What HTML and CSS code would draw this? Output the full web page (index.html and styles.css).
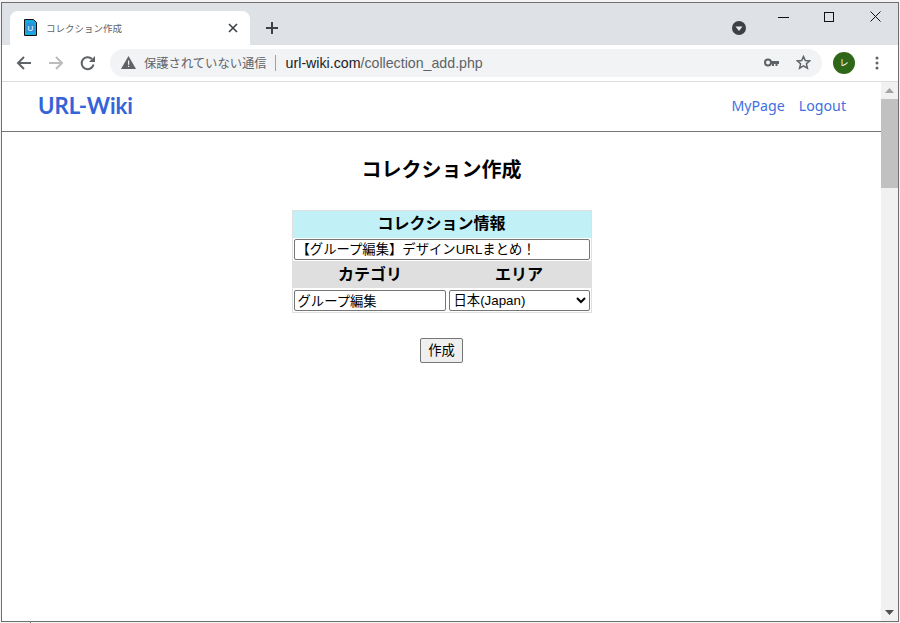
FILE: index.html
```html
<!DOCTYPE html>
<html lang="ja">
<head>
<meta charset="utf-8">
<title>コレクション作成</title>
<link rel="stylesheet" href="styles.css">
</head>
<body>
<div class="window">
  <div class="titlebar">
    <div class="tab">
      <svg class="favicon" width="13" height="17" viewBox="0 0 13 17"><path d="M.5.5h9l3 3v13H.5z" fill="#18a9e0" stroke="#111"/><rect x="2.500" y="4" width="8" height="9" rx="1" fill="#2f8fd8"/><text x="6.500" y="11.500" font-size="8" text-anchor="middle" fill="#fff" font-family="Liberation Sans">U</text></svg>
      <span class="tab-title">コレクション作成</span>
      <svg class="tab-close" width="10" height="10" viewBox="0 0 10 10"><path d="M1 1l8 8M9 1l-8 8" stroke="#3c4043" stroke-width="1.600"/></svg>
    </div>
    <svg class="new-tab" width="14" height="14" viewBox="0 0 14 14"><path d="M7 1v12M1 7h12" stroke="#3c4043" stroke-width="2"/></svg>
    <svg class="tab-search" width="14" height="14" viewBox="0 0 14 14"><circle cx="7" cy="7" r="7" fill="#3c4043"/><path d="M3.500 5.500h7L7 10z" fill="#e8eaed"/></svg>
    <div class="win-controls">
      <svg width="11" height="10" viewBox="0 0 11 10"><path d="M0 5.500h11" stroke="#111"/></svg>
      <svg width="10" height="10" viewBox="0 0 10 10"><rect x=".5" y=".5" width="9" height="9" fill="none" stroke="#111"/></svg>
      <svg class="win-close" width="11" height="11" viewBox="0 0 11 11"><path d="M.5.5l10 10M10.500.5l-10 10" stroke="#111"/></svg>
    </div>
  </div>
  <div class="toolbar">
    <svg class="nav" width="16" height="16" viewBox="0 0 16 16"><path d="M15 8H2M8 2L2 8l6 6" fill="none" stroke="#5f6368" stroke-width="2"/></svg>
    <svg class="nav" width="16" height="16" viewBox="0 0 16 16"><path d="M1 8h13M8 2l6 6-6 6" fill="none" stroke="#babcbe" stroke-width="2"/></svg>
    <svg class="nav" width="16" height="16" viewBox="0 0 16 16"><path d="M13.500 9.500A6 6 0 1 1 12 4" fill="none" stroke="#5f6368" stroke-width="2"/><path d="M15 1v6H9z" fill="#5f6368"/></svg>
    <div class="omnibox">
      <svg width="15" height="13" viewBox="0 0 15 13"><path d="M7.500 0L15 13H0z" fill="#5f6368"/><path d="M7 4.500h1.200v4.300H7zM7 9.800h1.200V11H7z" fill="#f1f3f4"/></svg>
      <span class="insecure">保護されていない通信</span>
      <span class="sep"></span>
      <span class="url"><span class="domain">url-wiki.com</span>/collection_add.php</span>
      <svg class="key" width="15" height="9" viewBox="0 0 15 9"><circle cx="4" cy="4.500" r="3" fill="none" stroke="#5f6368" stroke-width="2"/><path d="M7 3h8v3h-1.500v2h-2V6H10v2H8V6H7z" fill="#5f6368"/></svg>
      <svg class="star" width="15" height="15" viewBox="0 0 15 15"><path d="M7.500 1.500l1.800 4 4.400.4-3.300 2.900 1 4.300-3.900-2.300-3.900 2.300 1-4.300L1.300 5.900l4.400-.4z" fill="none" stroke="#5f6368" stroke-width="1.500"/></svg>
    </div>
    <span class="avatar">レ</span>
    <svg class="menu" width="4" height="14" viewBox="0 0 4 14"><circle cx="2" cy="2" r="1.500" fill="#5f6368"/><circle cx="2" cy="7" r="1.500" fill="#5f6368"/><circle cx="2" cy="12" r="1.500" fill="#5f6368"/></svg>
  </div>
  <div class="viewport">
    <main class="page">
      <header class="site-header">
        <a class="brand" href="#">URL-Wiki</a>
        <nav class="site-nav"><a href="#">MyPage</a><a href="#">Logout</a></nav>
      </header>
      <h1 class="page-title">コレクション作成</h1>
      <form class="form">
        <table class="info">
          <colgroup><col class="col-left"><col></colgroup>
          <tr><th colspan="2" class="head-blue">コレクション情報</th></tr>
          <tr><td colspan="2"><input class="field field-wide" type="text" value="【グループ編集】デザインURLまとめ！"></td></tr>
          <tr><th class="head-gray">カテゴリ</th><th class="head-gray">エリア</th></tr>
          <tr class="last-row">
            <td class="half"><input class="field field-plain" type="text" value="グループ編集"></td>
            <td class="half"><select class="field field-select"><option>日本(Japan)</option></select></td>
          </tr>
        </table>
        <button class="submit" type="button">作成</button>
      </form>
    </main>
    <div class="scrollbar">
      <svg width="9" height="5" viewBox="0 0 9 5"><path d="M4.500 0L9 5H0z" fill="#a3a3a3"/></svg>
      <div class="thumb"></div>
      <svg class="arrow-down" width="9" height="5" viewBox="0 0 9 5"><path d="M0 0h9L4.500 5z" fill="#505050"/></svg>
    </div>
  </div>
</div>
</body>
</html>
```

FILE: styles.css
```css
* { box-sizing: border-box; }
html, body { margin: 0; height: 100%; overflow: hidden; }
body { background: #f4f4f4; font-family: "Liberation Sans", "Noto Sans CJK JP", sans-serif; padding: 2px 1px 1px; }
.window {
  width: 898px; height: 620px; background: #fff;
  border: 1px solid #6e6e6e;
  display: flex; flex-direction: column; position: relative;
}
.window::after { content: ""; position: absolute; left: 28px; bottom: -2px; width: 1px; height: 2px; background: #777; }
.titlebar {
  height: 42px; flex: none; background: #dee1e6;
  display: flex; align-items: flex-end; padding-left: 8px; position: relative;
}
.tab {
  width: 240px; height: 34px; background: #fff;
  border-radius: 8px 8px 0 0;
  display: flex; align-items: center; padding: 0 12px 1px 14px;
}
.favicon { flex: none; }
.tab-title { margin-left: 9px; font-size: 9.500px; color: #5f6368; flex: 1; }
.new-tab { margin: 0 0 10px 15px; }
.tab-search { position: absolute; left: 730px; top: 18px; }
.win-controls { position: absolute; right: 17px; top: 8px; display: flex; gap: 35px; align-items: center; }
.win-close { margin-left: 1px; }
.toolbar {
  height: 37px; flex: none; background: #fff; border-bottom: 1px solid #dadce0;
  display: flex; align-items: center; padding: 0 0 1px 14px;
}
.nav { margin-right: 16px; flex: none; }
.nav:nth-child(3) { margin-right: 14px; }
.omnibox {
  width: 712px; height: 28px; border-radius: 14px; background: #f1f3f4;
  display: flex; align-items: center; padding-left: 11px;
}
.insecure { margin-left: 8px; color: #5f6368; font-size: 12.300px; }
.sep { width: 1px; height: 16px; background: #9aa0a6; margin: 0 10px 0 8px; }
.url { color: #5f6368; font-size: 14.200px; }
.domain { color: #202124; }
.key { margin-left: auto; margin-right: 17px; }
.star { margin-right: 11px; }
.avatar {
  width: 22px; height: 22px; border-radius: 50%; background: #2f6718; color: #fff;
  font-size: 9px; display: flex; align-items: center; justify-content: center;
  margin-left: 11px; flex: none;
}
.menu { margin-left: 20px; flex: none; }
.viewport { flex: 1; display: flex; min-height: 0; }
.page { flex: 1; min-width: 0; }
.site-header {
  height: 50px; border-bottom: 1px solid #777;
  display: flex; align-items: center; justify-content: space-between;
  padding: 0 35px 2px 36px;
}
.brand { color: #3563d8; font-size: 22.200px; font-weight: 700; text-decoration: none; font-family: Lato, "Liberation Sans", sans-serif; }
.site-nav { display: flex; gap: 14px; }
.site-nav a { color: #3f6fe0; font-size: 14.200px; text-decoration: none; font-family: "Noto Sans", sans-serif; }
.page-title { margin: 26px 0 28px; text-align: center; font-size: 20px; line-height: 24px; color: #000; font-weight: 700; }
.form { display: flex; flex-direction: column; align-items: center; }
.info {
  width: 300px; border-collapse: separate; border-spacing: 0;
  border: 1px solid #e0e0e0; background: #fff; table-layout: fixed;
}
.col-left { width: 155px; }
.info th { font-size: 16px; line-height: 20px; font-weight: 700; height: 27px; color: #000; }
.info .head-blue { background: #c1f0f7; padding: 0 0 2px; }
.info .head-gray { background: #dfdfdf; padding: 0; }
.info td { padding: 1px; height: 23px; }
.info .last-row td { height: 24px; padding-top: 2px; }
.field {
  display: block; width: 100%; height: 21px; margin: 0;
  border: 1px solid #767676; border-radius: 2px; background: #fff;
  font-size: 13.330px; font-family: "Liberation Sans", "Noto Sans CJK JP", sans-serif;
  color: #000; padding: 1px 2px;
}
.field-wide { padding-bottom: 3px; }
.field-plain { padding-left: 3px; }
.field-select { padding: 0; }
.info .last-row .half:first-child { padding-right: 2px; }
.submit {
  margin-top: 25px; width: 43px; height: 25px; padding: 0 0 2px;
  border: 1px solid #767676; border-radius: 2px; background: #efefef;
  font-size: 13.330px; font-family: "Liberation Sans", "Noto Sans CJK JP", sans-serif; color: #000;
}
.scrollbar {
  width: 17px; flex: none; background: #f1f1f1;
  display: flex; flex-direction: column; align-items: center; padding-top: 6px;
}
.thumb { width: 100%; height: 89px; background: #c1c1c1; margin-top: 6px; }
.arrow-down { margin-top: auto; margin-bottom: 6px; }
```
